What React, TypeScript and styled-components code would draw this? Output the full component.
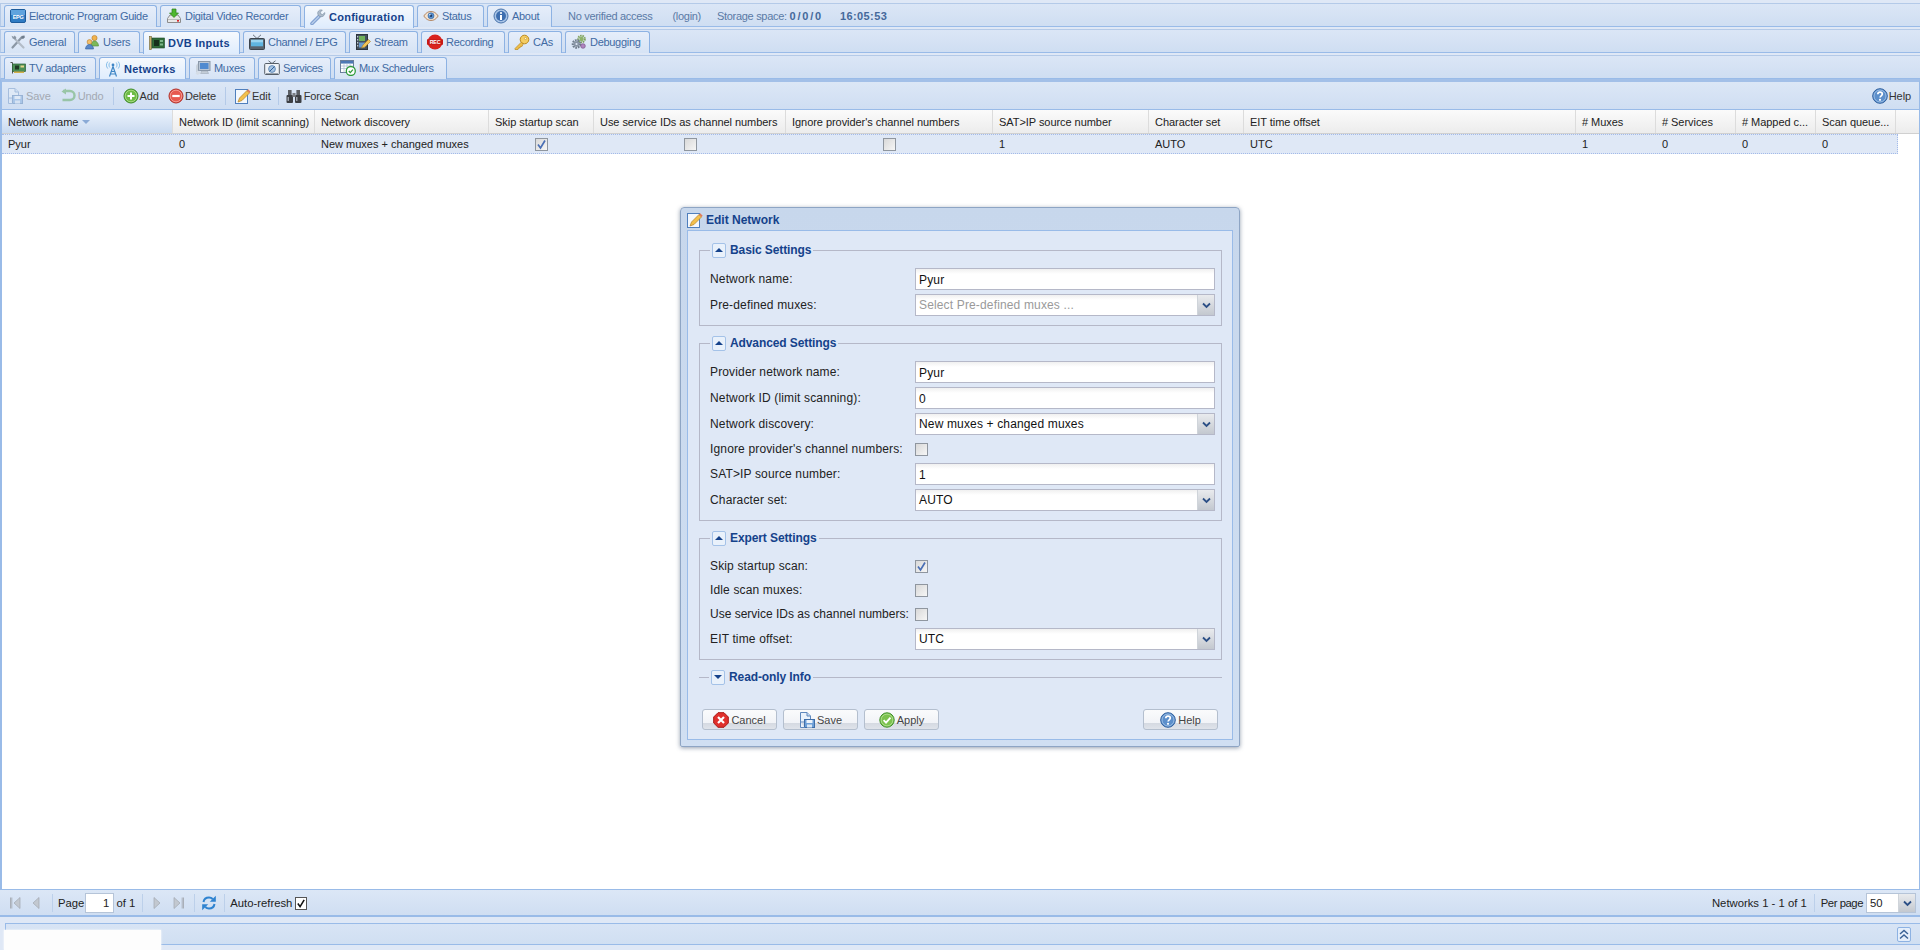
import React from "react";
import styled, { createGlobalStyle, css } from "styled-components";

const GlobalStyle = createGlobalStyle`
  html, body { margin: 0; padding: 0; background: #dfe8f6; overflow: hidden; }
  * { box-sizing: border-box; }
  body { font-family: "Liberation Sans", Arial, sans-serif; font-size: 11px; }
`;

/* icons, all drawn on a 16x16 grid */
const Svg = styled.svg<{ $dim?: boolean }>`
  width: 16px;
  height: 16px;
  flex: none;
  display: block;
  ${(p) => p.$dim && css`opacity: 0.4;`}
`;

type IconProps = { dim?: boolean };

const EpgIcon = () => (
  <Svg viewBox="0 0 16 16">
    <rect x="0.5" y="1.5" width="15" height="13" rx="1.5" fill="#2f7cc4" stroke="#1d5c9c" />
    <rect x="1" y="2" width="14" height="5" fill="#5fa3de" />
    <text x="8" y="10.5" fontSize="5.5" fontWeight="700" fontFamily="Liberation Sans" textAnchor="middle" fill="#fff">EPG</text>
  </Svg>
);
const DvrIcon = () => (
  <Svg viewBox="0 0 16 16">
    <path d="M1.5 10.5 4 7h8l2.5 3.5v4h-13z" fill="#e8e8e8" stroke="#8c8c8c" />
    <path d="M2 11h12v1H2z" fill="#bbb" />
    <rect x="11" y="12" width="2" height="1.6" fill="#d8262a" />
    <path d="M6 1h4v4h2.5L8 9.5 3.5 5H6z" fill="#4fb82e" stroke="#2f7d1a" strokeWidth="0.7" />
  </Svg>
);
const WrenchIcon = () => (
  <Svg viewBox="0 0 16 16">
    <path d="M2 14.5 9 7.5" stroke="#7f9fd0" strokeWidth="3.6" strokeLinecap="round" />
    <path d="M2 14.5 9 7.5" stroke="#b7cdea" strokeWidth="1.4" strokeLinecap="round" />
    <path d="M14.8 3.6 12.6 5.6 10.8 5 10.3 3.2 12.3 1.1C10.4.4 8.300 1.400 7.800 3.300 7.500 4.500 7.900 5.900 8.800 6.800 9.900 7.900 11.800 8 13.100 7.200 14.300 6.400 15 5 14.800 3.600z" fill="#aebccb" stroke="#76899e" strokeWidth="0.6" />
  </Svg>
);
const EyeIcon = () => (
  <Svg viewBox="0 0 16 16">
    <path d="M.8 8C3 4.600 5.400 3.500 8 3.500s5 1.100 7.200 4.500C13 11.400 10.600 12.500 8 12.500S3 11.400.8 8z" fill="#f2e3d2" stroke="#b58a68" />
    <circle cx="8" cy="7.800" r="3" fill="#5a92d0" stroke="#2e5f9e" strokeWidth="0.6" />
    <circle cx="8" cy="7.800" r="1.200" fill="#1c3a66" />
    <circle cx="6.900" cy="6.700" r="0.700" fill="#fff" />
  </Svg>
);
const InfoIcon = () => (
  <Svg viewBox="0 0 16 16">
    <circle cx="8" cy="8" r="7" fill="#a9c4e6" stroke="#4a74ab" />
    <circle cx="8" cy="8" r="5" fill="#3f6fb0" />
    <circle cx="8" cy="5" r="1.100" fill="#fff" />
    <rect x="7" y="7" width="2" height="5" fill="#fff" />
  </Svg>
);
const ToolsIcon = () => (
  <Svg viewBox="0 0 16 16">
    <path d="M2.500 13.500 12 3" stroke="#8b97a5" strokeWidth="2.200" strokeLinecap="round" />
    <path d="M13.500 13.500 5 5" stroke="#b3bcc7" strokeWidth="2.200" strokeLinecap="round" />
    <path d="M5.800 5.800 2.700 4.500 1.500 1.800 3.800 2.800 4.600 1.500 6.300 3.300z" fill="#8b97a5" />
    <path d="M14.500 1.500 12.500 1.800 11 4 13 5 14.800 3.500z" fill="#6f7d8c" />
  </Svg>
);
const UsersIcon = () => (
  <Svg viewBox="0 0 16 16">
    <circle cx="10.500" cy="4" r="2.600" fill="#f0b34f" stroke="#b97a24" strokeWidth="0.600" />
    <path d="M7 12c0-3 1.500-5 3.500-5s4 2 4 5z" fill="#7cb85a" stroke="#4d8a33" strokeWidth="0.600" />
    <circle cx="5.500" cy="8" r="2.400" fill="#f3bf6b" stroke="#b97a24" strokeWidth="0.600" />
    <path d="M1.500 15c0-2.500 1.700-4.500 4-4.500s4 2 4 4.500z" fill="#5a88c8" stroke="#2f5c9c" strokeWidth="0.600" />
  </Svg>
);
const CardIcon = () => (
  <Svg viewBox="0 0 16 16">
    <rect x="0.500" y="1.500" width="2" height="13" fill="#c8b26a" stroke="#6e5f2d" strokeWidth="0.600" />
    <rect x="3" y="3" width="12.500" height="10" fill="#2f6b3a" stroke="#1f4a28" strokeWidth="0.600" />
    <rect x="5" y="5" width="5" height="6" fill="#16301c" />
    <rect x="11" y="5" width="3" height="2" fill="#7fb88a" />
    <rect x="11" y="8.500" width="3" height="2" fill="#7fb88a" />
  </Svg>
);
const TvIcon = () => (
  <Svg viewBox="0 0 16 16">
    <path d="M4 .8 8 4.500 12 .8" fill="none" stroke="#5a6470" strokeWidth="0.900" />
    <rect x="0.500" y="4.500" width="15" height="11" rx="1" fill="#59636e" stroke="#3b434c" />
    <rect x="2" y="5.800" width="12" height="6.500" fill="#5fb4e0" />
    <rect x="2" y="5.800" width="12" height="2.500" fill="#9bd4f0" />
  </Svg>
);
const StreamIcon = () => (
  <Svg viewBox="0 0 16 16">
    <rect x="1.500" y="0.500" width="11" height="15" fill="#44505c" stroke="#2d363f" />
    <rect x="4" y="2" width="6" height="5" fill="#6fb05a" />
    <rect x="4" y="8.500" width="6" height="5" fill="#6a9ad0" />
    <path d="M2.200 2h1v1.400h-1zM2.200 5h1v1.400h-1zM2.200 8h1v1.400h-1zM2.200 11h1v1.400h-1z" fill="#dfe8f0" />
    <path d="M6.500 14 8 11 13.500 5.500 15.500 7.500 10 13z" fill="#f3c558" stroke="#a97e22" strokeWidth="0.600" />
  </Svg>
);
const RecIcon = () => (
  <Svg viewBox="0 0 16 16">
    <circle cx="8" cy="8" r="7.500" fill="#d9231f" />
    <rect x="0" y="5.300" width="16" height="5.400" fill="#c71a16" />
    <text x="8" y="10" fontSize="5.400" fontWeight="700" fontFamily="Liberation Sans" textAnchor="middle" fill="#fff">REC</text>
  </Svg>
);
const KeyIcon = () => (
  <Svg viewBox="0 0 16 16">
    <circle cx="10.500" cy="5.500" r="4.300" fill="#f4cd63" stroke="#bc8a20" />
    <circle cx="11.500" cy="4.500" r="1.100" fill="#fff6d6" stroke="#bc8a20" strokeWidth="0.500" />
    <path d="M7.500 8 1 14.500v1h3l.6-1.600h1.400l.5-1.500h1.500L9 10.500z" fill="#eebf4c" stroke="#bc8a20" strokeWidth="0.700" />
  </Svg>
);
const GearsIcon = () => (
  <Svg viewBox="0 0 16 16">
    <circle cx="10.500" cy="5" r="3.300" fill="none" stroke="#7fa25c" strokeWidth="2" strokeDasharray="1.500 0.800" />
    <circle cx="10.500" cy="5" r="2.200" fill="#8db36a" />
    <circle cx="5.500" cy="10" r="3.600" fill="none" stroke="#6f7c8c" strokeWidth="2.400" strokeDasharray="1.700 0.800" />
    <circle cx="5.500" cy="10" r="2.800" fill="#8794a4" />
    <circle cx="5.500" cy="10" r="1.100" fill="#dfe8f6" />
    <circle cx="12" cy="12" r="2.300" fill="#b085c0" stroke="#7b548b" strokeWidth="0.700" />
  </Svg>
);
const AdapterIcon = () => (
  <Svg viewBox="0 0 16 16">
    <path d="M.5 2.500h2v11" fill="none" stroke="#555" />
    <rect x="2.500" y="4" width="13" height="7.500" fill="#4c8f58" stroke="#2c5e36" strokeWidth="0.700" />
    <rect x="5" y="5.500" width="4" height="4" fill="#1f3a25" />
    <rect x="10.500" y="5.500" width="3.500" height="2" fill="#e6d48a" />
    <path d="M4 11.500h10v1.500H4z" fill="#d2b04a" />
  </Svg>
);
const AntennaIcon = () => (
  <Svg viewBox="0 0 16 16">
    <path d="M8 5.500 4.500 15.500M8 5.500l3.500 10M6.300 10.500h3.400M5.400 13h5.200" fill="none" stroke="#3f86c6" strokeWidth="1.200" />
    <circle cx="8" cy="4" r="1.400" fill="#3f86c6" />
    <path d="M4.800 1.500C3.700 3 3.700 5 4.800 6.500M11.200 1.500c1.100 1.500 1.100 3.500 0 5M2.800 .6c-1.800 2.300-1.800 4.900 0 7M13.200 .6c1.800 2.300 1.800 4.900 0 7" fill="none" stroke="#77b5e5" strokeWidth="0.900" />
  </Svg>
);
const MonitorIcon = () => (
  <Svg viewBox="0 0 16 16">
    <path d="M1 5.500 3 3v8l-2 2z" fill="#c9d2dc" />
    <rect x="3.500" y="1.500" width="11.500" height="9" fill="#b9c6d6" stroke="#8997a8" />
    <rect x="5" y="3" width="8.500" height="6" fill="#4f8ad0" />
    <path d="M6.500 11h6l1 2.500h-8z" fill="#c3cdd8" stroke="#95a1ae" strokeWidth="0.500" />
    <path d="M.5 13.500 4 10.500l2 2.500-3.500 2z" fill="#d5dde6" />
  </Svg>
);
const ServicesIcon = () => (
  <Svg viewBox="0 0 16 16">
    <path d="M4.500 .8 8 3.500 11.500 .8" fill="none" stroke="#555e68" strokeWidth="0.900" />
    <rect x="0.700" y="3.500" width="14.600" height="11" rx="1" fill="#eef2f7" stroke="#555e68" />
    <circle cx="8" cy="9" r="3.400" fill="#a6c4e4" stroke="#4f7cae" strokeWidth="0.800" />
    <path d="M5.500 11.500 10.500 6.500" stroke="#2f5f96" strokeWidth="1" />
    <path d="M2 13.500h12" stroke="#99a3ad" />
  </Svg>
);
const SchedulerIcon = () => (
  <Svg viewBox="0 0 16 16">
    <rect x="0.500" y="0.500" width="13" height="12" fill="#fff" stroke="#6a7e9c" />
    <rect x="1" y="1" width="12" height="2.600" fill="#4d78b5" />
    <path d="M1 6h12M1 8.500h12M4 3.500v9M7 3.500v9M10 3.500v9" stroke="#a9bad2" strokeWidth="0.700" />
    <circle cx="10.800" cy="11" r="4.500" fill="#fff" stroke="#2f9b3a" strokeWidth="1.300" />
    <path d="M8.800 11l1.500 1.600 2.600-3" fill="none" stroke="#2f9b3a" strokeWidth="1.300" />
  </Svg>
);
const SaveIcon = ({ dim }: IconProps) => (
  <Svg viewBox="0 0 16 16" $dim={dim}>
    <path d="M1.500.5H8L11.500 4v6H1.500z" fill="#eaf2fb" stroke="#5f88bd" />
    <path d="M8 .5V4h3.500" fill="#c6d9f0" stroke="#5f88bd" />
    <rect x="5.500" y="7.500" width="10" height="8" fill="#6ea0d8" stroke="#3f6ea8" />
    <rect x="7.500" y="8" width="6" height="3" fill="#eef4fb" />
    <rect x="8" y="12.500" width="5" height="3" fill="#dbe7f4" />
    <path d="M1.500 10v5.500h4" fill="#eaf2fb" stroke="#5f88bd" />
  </Svg>
);
const UndoIcon = ({ dim }: IconProps) => (
  <Svg viewBox="0 0 16 16" $dim={dim}>
    <path d="M3 3h7a4.500 4.500 0 0 1 0 9H2.500" fill="none" stroke="#3f9a35" strokeWidth="2.400" />
    <path d="M6 .5v6L1.500 3.500z" fill="#3f9a35" />
  </Svg>
);
const AddIcon = () => (
  <Svg viewBox="0 0 16 16">
    <circle cx="8" cy="8" r="7" fill="#6dbb45" stroke="#3d8a28" />
    <circle cx="8" cy="8" r="5.800" fill="none" stroke="#b4e08f" strokeWidth="0.800" />
    <path d="M8 4.500v7M4.500 8h7" stroke="#fff" strokeWidth="2" />
  </Svg>
);
const DeleteIcon = () => (
  <Svg viewBox="0 0 16 16">
    <circle cx="8" cy="8" r="7" fill="#e75a50" stroke="#b02d25" />
    <circle cx="8" cy="8" r="5.800" fill="none" stroke="#f5a8a0" strokeWidth="0.800" />
    <path d="M4.300 8h7.400" stroke="#fff" strokeWidth="2.200" />
  </Svg>
);
const EditIcon = () => (
  <Svg viewBox="0 0 16 16">
    <rect x="0.500" y="1.500" width="12" height="14" fill="#f4f8fd" stroke="#4f7fbd" />
    <path d="M3 14 4.500 10 12 2.500 14.500 5 7 12.500z" fill="#f3c04c" stroke="#b5822a" strokeWidth="0.700" />
    <path d="M12 2.500 13.200 1.300 15.700 3.800 14.500 5z" fill="#e07a5a" />
  </Svg>
);
const BinocularsIcon = () => (
  <Svg viewBox="0 0 16 16">
    <rect x="0.500" y="7" width="6.500" height="8" rx="1" fill="#3c3f44" />
    <rect x="9" y="7" width="6.500" height="8" rx="1" fill="#3c3f44" />
    <rect x="2" y="2" width="3.600" height="5" fill="#5a5e64" />
    <rect x="10.400" y="2" width="3.600" height="5" fill="#5a5e64" />
    <rect x="6.500" y="5" width="3" height="4" fill="#7a7e84" />
    <rect x="1.500" y="9" width="1.500" height="4" fill="#9aa0a8" />
    <rect x="10" y="9" width="1.500" height="4" fill="#9aa0a8" />
  </Svg>
);
const HelpIcon = () => (
  <Svg viewBox="0 0 16 16">
    <circle cx="8" cy="8" r="7.300" fill="#5c8fcb" stroke="#2e5f9e" />
    <circle cx="8" cy="8" r="6" fill="none" stroke="#b5d0ee" strokeWidth="0.700" />
    <path d="M5.800 6.200C5.900 4.800 6.900 4.200 8 4.200c1.300 0 2.300.8 2.300 1.900 0 1.700-2.200 1.700-2.200 3.400" fill="none" stroke="#fff" strokeWidth="1.700" />
    <circle cx="8" cy="11.800" r="1.100" fill="#fff" />
  </Svg>
);
const CancelIcon = () => (
  <Svg viewBox="0 0 16 16">
    <path d="M5 .7h6L15.300 5v6L11 15.300H5L.7 11V5z" fill="#e0302c" stroke="#a81814" />
    <path d="M5 5l6 6M11 5l-6 6" stroke="#fff" strokeWidth="2.200" />
  </Svg>
);
const ApplyIcon = () => (
  <Svg viewBox="0 0 16 16">
    <circle cx="8" cy="8" r="7.200" fill="#7cc24f" stroke="#3f8f2a" />
    <circle cx="8" cy="8" r="5.900" fill="none" stroke="#c2e8a5" strokeWidth="0.700" />
    <path d="M4.600 8.200 7 10.600 11.500 5.600" fill="none" stroke="#fff" strokeWidth="1.900" />
  </Svg>
);
const FirstIcon = () => (
  <Svg viewBox="0 0 16 16">
    <path d="M3.500 2.500v11M4.800 2.500v11" stroke="#a9afb8" />
    <path d="M13 2.500v11L7 8z" fill="#c2c8d0" stroke="#a0a7b0" strokeWidth="0.700" />
  </Svg>
);
const PrevIcon = () => (
  <Svg viewBox="0 0 16 16">
    <path d="M11 2.500v11L5 8z" fill="#c2c8d0" stroke="#a0a7b0" strokeWidth="0.700" />
  </Svg>
);
const NextIcon = () => (
  <Svg viewBox="0 0 16 16">
    <path d="M5 2.500v11L11 8z" fill="#c2c8d0" stroke="#a0a7b0" strokeWidth="0.700" />
  </Svg>
);
const LastIcon = () => (
  <Svg viewBox="0 0 16 16">
    <path d="M3 2.500v11L9 8z" fill="#c2c8d0" stroke="#a0a7b0" strokeWidth="0.700" />
    <path d="M11.200 2.500v11M12.500 2.500v11" stroke="#a9afb8" />
  </Svg>
);
const RefreshIcon = () => (
  <Svg viewBox="0 0 16 16">
    <path d="M2.500 7C3 4 5.500 2.500 8 2.500c1.500 0 2.800.6 3.700 1.500" fill="none" stroke="#2f83d0" strokeWidth="2" />
    <path d="M14.800 .8v6h-6z" fill="#2f83d0" />
    <path d="M13.500 9c-.5 3-3 4.500-5.500 4.500-1.500 0-2.800-.6-3.700-1.500" fill="none" stroke="#2f83d0" strokeWidth="2" />
    <path d="M1.200 15.200v-6h6z" fill="#2f83d0" />
  </Svg>
);

/* page shell */
const Page = styled.div`
  position: relative;
  width: 1920px;
  height: 950px;
  display: flex;
  flex-direction: column;
  padding-top: 3px;
  overflow: hidden;
  background: #dfe8f6;
`;

const TabBar = styled.div`
  height: 24px;
  margin-bottom: 2px;
  padding: 2px 0 0 3px;
  display: flex;
  gap: 3px;
  align-items: stretch;
  background: linear-gradient(#dbe6f6, #cfdef2);
  border-top: 1px solid #b4cae8;
  border-bottom: 1px solid #99bbe8;
  border-left: 1px solid #b4cae8;
`;

const Tab = styled.div<{ $w: number; $active?: boolean }>`
  width: ${(p) => p.$w}px;
  height: 22px;
  margin-top: -1px;
  padding: 0 0 1px 5px;
  display: flex;
  align-items: center;
  gap: 3px;
  white-space: nowrap;
  font-size: 11px;
  letter-spacing: -0.3px;
  color: #416aa3;
  border: 1px solid #8db2e3;
  border-bottom: none;
  border-radius: 3px 3px 0 0;
  background: linear-gradient(#e6eefa, #d6e3f5);
  ${(p) =>
    p.$active &&
    css`
      height: 23px;
      font-weight: 700;
      letter-spacing: 0.25px;
      color: #15428b;
      background: linear-gradient(#f6f9fd, #deecfd);
    `}
`;

const BarInfo = styled.span<{ $left: number }>`
  margin-left: ${(p) => p.$left}px;
  align-self: center;
  white-space: nowrap;
  color: #5a7aa6;
  font-size: 11px;
  letter-spacing: -0.3px;
`;

const BarValue = styled.b<{ $spacing: number }>`
  color: #45699b;
  letter-spacing: ${(p) => p.$spacing}px;
`;

const Panel = styled.div`
  flex: 1;
  min-height: 0;
  margin-top: -2px;
  display: flex;
  flex-direction: column;
  border-left: 2px solid #99bbe8;
  border-right: 1px solid #99bbe8;
  border-top: 3px solid #a3c0e8;
  background: #fff;
`;

const Toolbar = styled.div`
  height: 28px;
  flex: none;
  padding: 0 8px 0 5px;
  display: flex;
  align-items: center;
  gap: 9px;
  background: linear-gradient(#dce7f6, #cfdef2);
  border-bottom: 1px solid #99bbe8;
`;

const ToolButton = styled.div<{ $dim?: boolean; $iconGap?: number }>`
  display: flex;
  align-items: center;
  gap: ${(p) => p.$iconGap ?? 1}px;
  white-space: nowrap;
  font-size: 11px;
  letter-spacing: -0.1px;
  color: ${(p) => (p.$dim ? "#a3a9b2" : "#333")};
`;

const ToolSep = styled.div<{ $tight?: boolean }>`
  width: 1px;
  height: 18px;
  background: #b4cae8;
  ${(p) => p.$tight && css`margin: 0 -2px;`}
`;

const Spacer = styled.div`
  flex: 1;
`;

/* grid */
const GridHeader = styled.div`
  height: 24px;
  flex: none;
  display: flex;
  background: linear-gradient(#fbfbfb, #ececec);
  border-bottom: 1px solid #d0d0d0;
`;

const HeaderCell = styled.div<{ $w: number; $sorted?: boolean }>`
  width: ${(p) => p.$w}px;
  flex: none;
  padding-left: 6px;
  display: flex;
  align-items: center;
  gap: 4px;
  font-size: 11px;
  letter-spacing: -0.05px;
  color: #222;
  white-space: nowrap;
  overflow: hidden;
  border-right: 1px solid #dcdcdc;
  ${(p) => p.$sorted && css`background: linear-gradient(#edf4fd, #c9daf0);`}
`;

const SortCaret = styled.span`
  width: 0;
  height: 0;
  border-left: 4px solid transparent;
  border-right: 4px solid transparent;
  border-top: 4px solid #8aaad6;
`;

const GridRow = styled.div`
  width: 1896px;
  height: 20px;
  flex: none;
  display: flex;
  background: #dfe8f6;
  border-top: 1px dotted #a3bae9;
  border-bottom: 1px dotted #a3bae9;
  border-right: 1px dotted #a3bae9;
`;

const Cell = styled.div<{ $w: number; $center?: boolean }>`
  width: ${(p) => p.$w}px;
  flex: none;
  padding-left: 6px;
  display: flex;
  align-items: center;
  font-size: 11px;
  color: #222;
  white-space: nowrap;
  ${(p) => p.$center && css`justify-content: center; padding-left: 0;`}
`;

const CheckBox = styled.span<{ $on?: boolean }>`
  width: 13px;
  height: 13px;
  flex: none;
  display: flex;
  align-items: center;
  justify-content: center;
  border: 1px solid #8f969f;
  background: linear-gradient(135deg, #d9d9d9, #f6f6f6);
`;

const GridBody = styled.div`
  flex: 1;
  background: #fff;
`;

const Pager = styled.div`
  height: 28px;
  flex: none;
  padding: 1px 4px 0 7px;
  display: flex;
  align-items: center;
  background: linear-gradient(#dce7f6, #cfdef2);
  border-top: 1px solid #99bbe8;
  border-bottom: 2px solid #99bbe8;
  margin-left: -2px;
  margin-right: -1px;
  font-size: 11.3px;
  color: #222;
`;

const PagerIcon = styled.span<{ $gap: number }>`
  display: flex;
  margin-left: ${(p) => p.$gap}px;
`;

const PagerSep = styled.div<{ $l: number; $r: number }>`
  width: 1px;
  height: 18px;
  margin: 0 ${(p) => p.$r}px 0 ${(p) => p.$l}px;
  background: #bcd0ea;
`;

const PageInput = styled.div`
  width: 29px;
  height: 20px;
  margin: 0 2px 0 1px;
  padding-right: 4px;
  display: flex;
  align-items: center;
  justify-content: flex-end;
  background: #fff;
  border: 1px solid #b5c4d8;
`;

const NativeCheck = styled.span`
  width: 12px;
  height: 13px;
  margin-left: 3px;
  display: flex;
  align-items: center;
  justify-content: center;
  background: #fff;
  border: 1px solid #555;
`;

const PerPageLabel = styled.span`
  letter-spacing: -0.45px;
`;

const PerPageCombo = styled.div`
  width: 50px;
  height: 20px;
  margin-left: 3px;
  padding-left: 3px;
  display: flex;
  align-items: center;
  justify-content: space-between;
  background: #fff;
  border: 1px solid #b5c4d8;
`;

const ComboArrow = styled.span`
  width: 17px;
  height: 100%;
  flex: none;
  display: flex;
  align-items: center;
  justify-content: center;
  background: linear-gradient(#e9ebee, #c3c8cf);
  border-left: 1px solid #cfd4da;
`;

const Gap = styled.div<{ $h: number }>`
  height: ${(p) => p.$h}px;
  flex: none;
`;

const StatusBar = styled.div`
  height: 22px;
  flex: none;
  margin-left: 5px;
  padding-right: 9px;
  display: flex;
  align-items: center;
  justify-content: flex-end;
  background: linear-gradient(#d8e4f5, #d0dff2);
  border: 1px solid #99bbe8;
  border-right: none;
`;

const CollapseButton = styled.span`
  width: 14px;
  height: 15px;
  display: flex;
  align-items: center;
  justify-content: center;
  background: #e4eefb;
  border: 1px solid #8db2e3;
  border-radius: 2px;
`;

const RedactedPatch = styled.div`
  position: absolute;
  left: 4px;
  bottom: 0;
  width: 157px;
  height: 20px;
  background: #fdfdfd;
  box-shadow: 0 0 2px #fff;
`;

/* edit window */
const Win = styled.div`
  position: absolute;
  left: 680px;
  top: 207px;
  width: 560px;
  height: 540px;
  padding: 0 6px 6px;
  display: flex;
  flex-direction: column;
  background: linear-gradient(#c7d7ec, #d0dff2);
  border: 1px solid #8ea5c4;
  border-radius: 4px 4px 2px 2px;
  box-shadow: 0 1px 4px rgba(60, 80, 110, 0.55);
`;

const WinTitle = styled.div`
  height: 22px;
  flex: none;
  padding-top: 2px;
  display: flex;
  align-items: center;
  gap: 3px;
  font-size: 12px;
  font-weight: 700;
  color: #15428b;
`;

const WinBody = styled.div`
  flex: 1;
  min-height: 0;
  padding: 11px 10px 0 11px;
  background: #dfe8f6;
  border: 1px solid #99bbe8;
`;

const Group = styled.fieldset<{ $collapsed?: boolean }>`
  margin: 0 0 9px;
  padding: 10px 6px 9px 10px;
  min-width: 0;
  border: 1px solid #b5b8c8;
  ${(p) =>
    p.$collapsed &&
    css`
      padding: 0 0 0 10px;
      margin-bottom: 0;
      border-width: 1px 0 0;
    `}
`;

const GroupLegend = styled.legend`
  padding: 0 2px;
  height: 16px;
  display: flex;
  align-items: center;
  gap: 4px;
  font-size: 12px;
  font-weight: 700;
  letter-spacing: -0.1px;
  color: #15428b;
`;

const GroupToggle = styled.span`
  width: 14px;
  height: 15px;
  display: flex;
  align-items: center;
  justify-content: center;
  background: #e9f1fb;
  border: 1px solid #a4c2e8;
  border-radius: 2px;
`;

const Caret = styled.span<{ $down?: boolean }>`
  width: 0;
  height: 0;
  border-left: 4px solid transparent;
  border-right: 4px solid transparent;
  ${(p) =>
    p.$down
      ? css`border-top: 4px solid #15428b;`
      : css`border-bottom: 4px solid #15428b;`}
`;

const FieldRow = styled.div<{ $check?: boolean }>`
  height: ${(p) => (p.$check ? 20 : 22)}px;
  margin-bottom: 4px;
  display: flex;
  align-items: center;
  &:last-child { margin-bottom: 0; }
`;

const FieldLabel = styled.label<{ $tight?: boolean }>`
  width: 205px;
  flex: none;
  font-size: 12px;
  letter-spacing: ${(p) => (p.$tight ? 0 : 0.15)}px;
  color: #222;
  white-space: nowrap;
`;

const TextBox = styled.div<{ $placeholder?: boolean }>`
  width: 300px;
  height: 22px;
  padding: 1px 0 0 3px;
  display: flex;
  align-items: center;
  font-size: 12px;
  letter-spacing: 0.15px;
  color: ${(p) => (p.$placeholder ? "#9a9a9a" : "#111")};
  background: linear-gradient(#f0f0f0, #fff 5px);
  border: 1px solid #b5b8c8;
`;

const ComboBox = styled(TextBox)`
  padding-top: 0;
  justify-content: space-between;
`;

const WinActions = styled.div`
  margin-top: 24px;
  padding: 0 4px 0 3px;
  display: flex;
  gap: 6px;
`;

const WinButton = styled.button<{ $right?: boolean }>`
  width: 75px;
  height: 21px;
  padding: 0;
  display: flex;
  align-items: center;
  justify-content: center;
  gap: 2px;
  font-family: inherit;
  font-size: 11px;
  color: #444;
  background: linear-gradient(#fafbfc 0, #f1f3f7 70%, #d5dae2 70%, #dfe3ea 100%);
  border: 1px solid #b4bfce;
  border-radius: 3px;
  ${(p) => p.$right && css`margin-left: auto;`}
`;

const Chevron = () => (
  <svg width="9" height="7" viewBox="0 0 9 7">
    <path d="M1 1.500 4.500 5 8 1.500" fill="none" stroke="#2c4f86" strokeWidth="1.800" />
  </svg>
);

const Tick = ({ color }: { color: string }) => (
  <svg width="11" height="11" viewBox="0 0 11 11">
    <path d="M2 5.500 4.500 9 9 1.500" fill="none" stroke={color} strokeWidth="1.700" />
  </svg>
);

const columns = [
  { name: "Network name", w: 171 },
  { name: "Network ID (limit scanning)", w: 142 },
  { name: "Network discovery", w: 174 },
  { name: "Skip startup scan", w: 105 },
  { name: "Use service IDs as channel numbers", w: 192 },
  { name: "Ignore provider's channel numbers", w: 207 },
  { name: "SAT>IP source number", w: 156 },
  { name: "Character set", w: 95 },
  { name: "EIT time offset", w: 332 },
  { name: "# Muxes", w: 80 },
  { name: "# Services", w: 80 },
  { name: "# Mapped c...", w: 80 },
  { name: "Scan queue...", w: 80 },
];

function Section({ title, children }: { title: string; children: React.ReactNode }) {
  return (
    <Group>
      <GroupLegend>
        <GroupToggle><Caret /></GroupToggle>
        {title}
      </GroupLegend>
      {children}
    </Group>
  );
}

function TextField({ label, value }: { label: string; value: string }) {
  return (
    <FieldRow>
      <FieldLabel>{label}</FieldLabel>
      <TextBox>{value}</TextBox>
    </FieldRow>
  );
}

function ComboField({ label, value, placeholder }: { label: string; value: string; placeholder?: boolean }) {
  return (
    <FieldRow>
      <FieldLabel>{label}</FieldLabel>
      <ComboBox $placeholder={placeholder}>
        {value}
        <ComboArrow><Chevron /></ComboArrow>
      </ComboBox>
    </FieldRow>
  );
}

function CheckField({ label, on, tight }: { label: string; on?: boolean; tight?: boolean }) {
  return (
    <FieldRow $check>
      <FieldLabel $tight={tight}>{label}</FieldLabel>
      <CheckBox $on={on}>{on && <Tick color="#4a6fb5" />}</CheckBox>
    </FieldRow>
  );
}

export default function App() {
  return (
    <Page>
      <GlobalStyle />

      <TabBar>
        <Tab $w={153}><EpgIcon />Electronic Program Guide</Tab>
        <Tab $w={141}><DvrIcon />Digital Video Recorder</Tab>
        <Tab $w={110} $active><WrenchIcon />Configuration</Tab>
        <Tab $w={67}><EyeIcon />Status</Tab>
        <Tab $w={65}><InfoIcon />About</Tab>
        <BarInfo $left={13}>No verified access</BarInfo>
        <BarInfo $left={17}>(login)</BarInfo>
        <BarInfo $left={13}>Storage space: <BarValue $spacing={1.8}>0/0/0</BarValue></BarInfo>
        <BarInfo $left={14}><BarValue $spacing={0.4}>16:05:53</BarValue></BarInfo>
      </TabBar>

      <TabBar>
        <Tab $w={71}><ToolsIcon />General</Tab>
        <Tab $w={62}><UsersIcon />Users</Tab>
        <Tab $w={97} $active><CardIcon />DVB Inputs</Tab>
        <Tab $w={103}><TvIcon />Channel / EPG</Tab>
        <Tab $w={69}><StreamIcon />Stream</Tab>
        <Tab $w={84}><RecIcon />Recording</Tab>
        <Tab $w={54}><KeyIcon />CAs</Tab>
        <Tab $w={85}><GearsIcon />Debugging</Tab>
      </TabBar>

      <TabBar>
        <Tab $w={92}><AdapterIcon />TV adapters</Tab>
        <Tab $w={87} $active><AntennaIcon />Networks</Tab>
        <Tab $w={66}><MonitorIcon />Muxes</Tab>
        <Tab $w={73}><ServicesIcon />Services</Tab>
        <Tab $w={113}><SchedulerIcon />Mux Schedulers</Tab>
      </TabBar>

      <Panel>
        <Toolbar>
          <ToolButton $dim $iconGap={3}><SaveIcon dim />Save</ToolButton>
          <ToolButton $dim $iconGap={2}><UndoIcon dim />Undo</ToolButton>
          <ToolSep />
          <ToolButton><AddIcon />Add</ToolButton>
          <ToolButton><DeleteIcon />Delete</ToolButton>
          <ToolSep />
          <ToolButton><EditIcon />Edit</ToolButton>
          <ToolSep $tight />
          <ToolButton $iconGap={2}><BinocularsIcon />Force Scan</ToolButton>
          <Spacer />
          <ToolButton><HelpIcon />Help</ToolButton>
        </Toolbar>

        <GridHeader>
          {columns.map((c, i) => (
            <HeaderCell key={c.name} $w={c.w} $sorted={i === 0}>
              {c.name}
              {i === 0 && <SortCaret />}
            </HeaderCell>
          ))}
        </GridHeader>

        <GridRow>
          <Cell $w={171}>Pyur</Cell>
          <Cell $w={142}>0</Cell>
          <Cell $w={174}>New muxes + changed muxes</Cell>
          <Cell $w={105} $center><CheckBox $on><Tick color="#4a6fb5" /></CheckBox></Cell>
          <Cell $w={192} $center><CheckBox /></Cell>
          <Cell $w={207} $center><CheckBox /></Cell>
          <Cell $w={156}>1</Cell>
          <Cell $w={95}>AUTO</Cell>
          <Cell $w={332}>UTC</Cell>
          <Cell $w={80}>1</Cell>
          <Cell $w={80}>0</Cell>
          <Cell $w={80}>0</Cell>
          <Cell $w={80}>0</Cell>
        </GridRow>

        <GridBody />

        <Pager>
          <PagerIcon $gap={0}><FirstIcon /></PagerIcon>
          <PagerIcon $gap={5}><PrevIcon /></PagerIcon>
          <PagerSep $l={8} $r={5} />
          Page
          <PageInput>1</PageInput>
          of 1
          <PagerSep $l={7} $r={6} />
          <PagerIcon $gap={0}><NextIcon /></PagerIcon>
          <PagerIcon $gap={6}><LastIcon /></PagerIcon>
          <PagerSep $l={7} $r={6} />
          <PagerIcon $gap={0}><RefreshIcon /></PagerIcon>
          <PagerSep $l={7} $r={5} />
          Auto-refresh
          <NativeCheck><Tick color="#111" /></NativeCheck>
          <Spacer />
          Networks 1 - 1 of 1
          <PagerSep $l={7} $r={6} />
          <PerPageLabel>Per page</PerPageLabel>
          <PerPageCombo>
            50
            <ComboArrow><Chevron /></ComboArrow>
          </PerPageCombo>
        </Pager>
      </Panel>

      <Gap $h={6} />

      <StatusBar>
        <CollapseButton>
          <svg width="10" height="11" viewBox="0 0 10 11">
            <path d="M1 5 5 1.500 9 5M1 9.500 5 6 9 9.500" fill="none" stroke="#3a6296" strokeWidth="1.400" />
          </svg>
        </CollapseButton>
      </StatusBar>
      <Gap $h={5} />

      <RedactedPatch />

      <Win>
        <WinTitle><EditIcon />Edit Network</WinTitle>
        <WinBody>
          <Section title="Basic Settings">
            <TextField label="Network name:" value="Pyur" />
            <ComboField label="Pre-defined muxes:" value="Select Pre-defined muxes ..." placeholder />
          </Section>

          <Section title="Advanced Settings">
            <TextField label="Provider network name:" value="Pyur" />
            <TextField label="Network ID (limit scanning):" value="0" />
            <ComboField label="Network discovery:" value="New muxes + changed muxes" />
            <CheckField label="Ignore provider's channel numbers:" />
            <TextField label="SAT>IP source number:" value="1" />
            <ComboField label="Character set:" value="AUTO" />
          </Section>

          <Section title="Expert Settings">
            <CheckField label="Skip startup scan:" on />
            <CheckField label="Idle scan muxes:" />
            <CheckField label="Use service IDs as channel numbers:" tight />
            <ComboField label="EIT time offset:" value="UTC" />
          </Section>

          <Group $collapsed>
            <GroupLegend>
              <GroupToggle><Caret $down /></GroupToggle>
              Read-only Info
            </GroupLegend>
          </Group>

          <WinActions>
            <WinButton><CancelIcon />Cancel</WinButton>
            <WinButton><SaveIcon />Save</WinButton>
            <WinButton><ApplyIcon />Apply</WinButton>
            <WinButton $right><HelpIcon />Help</WinButton>
          </WinActions>
        </WinBody>
      </Win>
    </Page>
  );
}
